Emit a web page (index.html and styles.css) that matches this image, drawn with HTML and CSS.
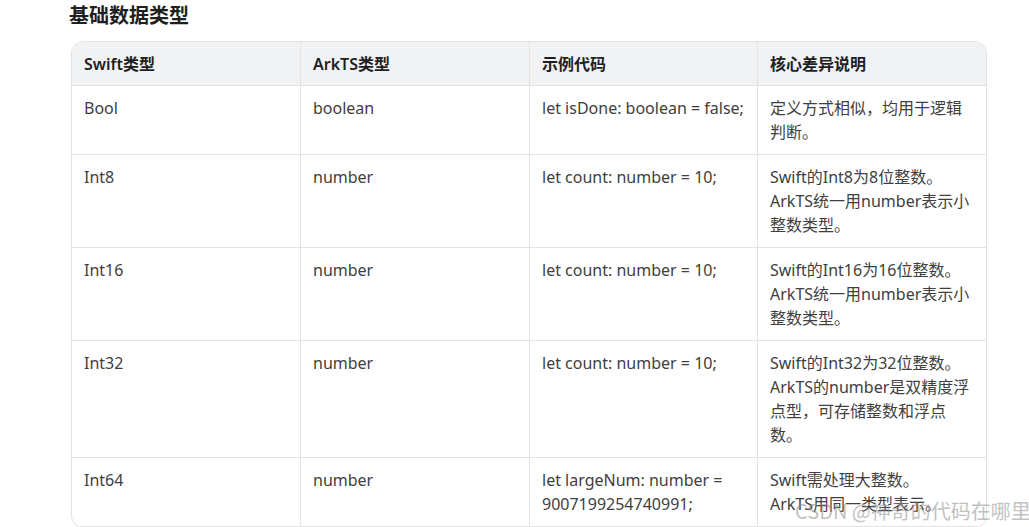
FILE: index.html
```html
<!DOCTYPE html>
<html lang="zh-CN">
<head>
<meta charset="utf-8">
<title>基础数据类型</title>
<link rel="stylesheet" href="styles.css">
</head>
<body>
<main class="page">
  <h3 class="title">基础数据类型</h3>
  <div class="table">
    <div class="cell head">Swift类型</div>
    <div class="cell head">ArkTS类型</div>
    <div class="cell head">示例代码</div>
    <div class="cell head last">核心差异说明</div>

    <div class="cell">Bool</div>
    <div class="cell">boolean</div>
    <div class="cell">let isDone: boolean = false;</div>
    <div class="cell last">定义方式相似，均用于逻辑判断。</div>

    <div class="cell">Int8</div>
    <div class="cell">number</div>
    <div class="cell">let count: number = 10;</div>
    <div class="cell last">Swift的Int8为8位整数。<br>ArkTS统一用number表示小整数类型。</div>

    <div class="cell">Int16</div>
    <div class="cell">number</div>
    <div class="cell">let count: number = 10;</div>
    <div class="cell last">Swift的Int16为16位整数。<br>ArkTS统一用number表示小整数类型。</div>

    <div class="cell">Int32</div>
    <div class="cell">number</div>
    <div class="cell">let count: number = 10;</div>
    <div class="cell last">Swift的Int32为32位整数。<br>ArkTS的number是双精度浮点型，可存储整数和浮点数。</div>

    <div class="cell">Int64</div>
    <div class="cell">number</div>
    <div class="cell">let largeNum: number = 9007199254740991;</div>
    <div class="cell last">Swift需处理大整数。<br>ArkTS用同一类型表示。</div>
  </div>
</main>
<div class="watermark">CSDN @神奇的代码在哪里</div>
</body>
</html>
```
FILE: styles.css
```css
html, body {
  margin: 0;
  padding: 0;
  background: #ffffff;
}

body {
  font-family: "Noto Sans", "Noto Sans CJK SC", sans-serif;
  color: #333333;
  overflow: hidden;
}

.page {
  padding: 2px 0 0 71px;
}

.title {
  margin: 0 0 11px -2px;
  font-size: 20px;
  line-height: 28px;
  font-weight: 700;
  color: #1f1f1f;
}

.table {
  display: grid;
  grid-template-columns: 229px 229px 228px 228px;
  width: 914px;
  border: 1px solid #e3e3e3;
  border-radius: 12px;
  overflow: hidden;
}

.cell {
  padding: 10px 12px 10px 12px;
  font-size: 16px;
  line-height: 24px;
  border-right: 1px solid #e3e3e3;
  border-bottom: 1px solid #e3e3e3;
  color: #404040;
}

.cell.last {
  border-right: none;
}

.cell.head {
  background: #f1f2f3;
  font-weight: 600;
  color: #1f1f1f;
  padding-bottom: 9px;
}

.watermark {
  position: absolute;
  left: 795px;
  top: 497px;
  font-family: "Noto Sans CJK SC", sans-serif;
  font-size: 20px;
  line-height: 28px;
  color: rgba(140, 140, 140, 0.55);
  white-space: nowrap;
}
```
